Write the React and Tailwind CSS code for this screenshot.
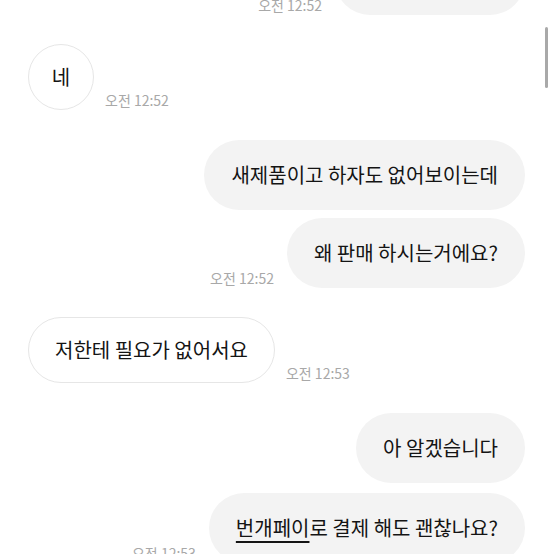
import React from 'react'

const font = { fontFamily: '"Noto Sans CJK KR", "Noto Sans", sans-serif' }

function Time({ children }) {
  return (
    <span className="mb-[2px] text-[14px] leading-[16px] text-[#a8a8a8] whitespace-nowrap">
      {children}
    </span>
  )
}

function Mine({ children, time, className = '' }) {
  return (
    <div className={`flex justify-end items-end gap-[13px] pr-[29px] ${className}`}>
      {time && <Time>{time}</Time>}
      <div className="h-[70px] flex items-center px-[27px] rounded-full bg-[#f3f3f3] text-[20px] text-[#141414] whitespace-nowrap">
        {children}
      </div>
    </div>
  )
}

function Theirs({ children, time, className = '', round }) {
  return (
    <div className={`flex items-end gap-[11px] pl-[28px] ${className}`}>
      <div
        className={
          round
            ? 'w-[66px] h-[66px] flex items-center justify-center rounded-full border border-[#e6e6e6] bg-white text-[20px] text-[#141414]'
            : 'h-[66px] flex items-center px-[26px] rounded-full border border-[#e6e6e6] bg-white text-[20px] text-[#141414] whitespace-nowrap'
        }
      >
        {children}
      </div>
      {time && <Time>{time}</Time>}
    </div>
  )
}

export default function App() {
  return (
    <div className="relative h-[554px] w-[554px] overflow-hidden bg-white" style={font}>
      <div className="flex flex-col">
        {/* previous message, scrolled mostly out of view */}
        <Mine time="오전 12:52" className="-mt-[55px]">
          <span className="block w-[136px]" />
        </Mine>
        <Theirs round time="오전 12:52" className="mt-[29px]">네</Theirs>
        <Mine className="mt-[30px]">새제품이고 하자도 없어보이는데</Mine>
        <Mine time="오전 12:52" className="mt-[8px]">왜 판매 하시는거에요?</Mine>
        <Theirs time="오전 12:53" className="mt-[29px]">저한테 필요가 없어서요</Theirs>
        <Mine className="mt-[30px]">아 알겠습니다</Mine>
        <Mine time="오전 12:53" className="mt-[10px]">
          <span>
            <span className="underline underline-offset-[5px]">번개페이</span>로 결제 해도 괜찮나요?
          </span>
        </Mine>
      </div>
      <div className="absolute right-[6px] top-[27px] w-[3px] h-[61px] rounded-full bg-[#a9a9a9]" />
    </div>
  )
}
